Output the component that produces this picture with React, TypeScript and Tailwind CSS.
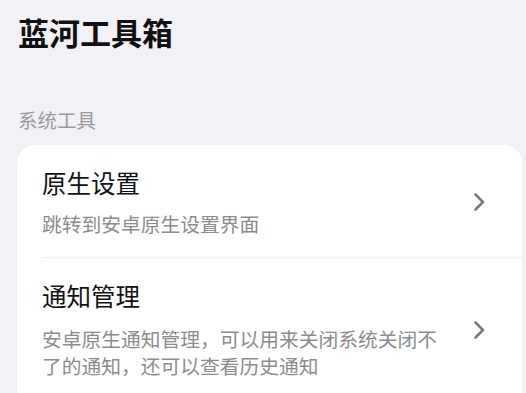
import React from "react";

const Chevron = () => (
  <svg width="14" height="20" viewBox="0 0 14 20" fill="none" className="shrink-0">
    <path d="M2.5 2.5 L10 10 L2.5 17.5" stroke="#7a7a7e" strokeWidth="2.6" strokeLinecap="round" strokeLinejoin="round" />
  </svg>
);

const Item = ({ title, desc, last }: { title: string; desc: string; last?: boolean }) => (
  <div className="flex flex-col">
    <div className={`flex items-center pl-[25px] pr-[35px] ${last ? "pt-[22px] pb-[23px]" : "pt-[22px] pb-[20px]"}`}>
      <div className="flex-1 min-w-0">
        <div className="text-[24.5px] leading-[32px] text-[#111111]">{title}</div>
        <div className={`${last ? "mt-[13px]" : "mt-[11px]"} text-[19.75px] leading-[27px] text-[#8c8c90] pr-[20px]`}>{desc}</div>
      </div>
      <Chevron />
    </div>
    {!last && <div className="ml-[25px] h-px bg-[#ededf0]" />}
  </div>
);

export default function App() {
  return (
    <div
      className="w-[526px] h-[393px] overflow-hidden bg-[#f2f1f6]"
      style={{ fontFamily: '"Noto Sans CJK SC", "Noto Sans", sans-serif' }}
    >
      <div className="pl-[17px] pr-[4px] pt-[12px]">
        <h1 className="pl-px text-[31px] leading-[40px] font-bold text-[#111111]">蓝河工具箱</h1>
        <div className="mt-[54px] pl-px text-[19.5px] leading-[27px] text-[#9a9a9e]">系统工具</div>
        <div className="mt-[12px] rounded-[18px] bg-white pb-[40px]">
          <Item title="原生设置" desc="跳转到安卓原生设置界面" />
          <Item title="通知管理" desc="安卓原生通知管理，可以用来关闭系统关闭不了的通知，还可以查看历史通知" last />
        </div>
      </div>
    </div>
  );
}
